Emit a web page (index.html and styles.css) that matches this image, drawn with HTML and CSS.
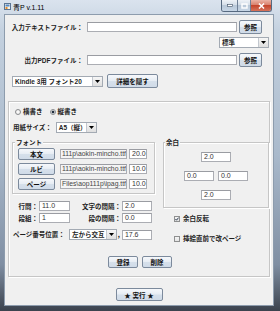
FILE: index.html
```html
<!DOCTYPE html>
<html>
<head>
    <meta charset="utf-8">
    <title>青P v.1.11</title>
    <link rel="stylesheet" href="styles.css">
</head>
<body>
    <div class="window">
        <div class="titlebar">
            <svg class="app-icon" width="7" height="7" viewBox="0 0 7 7">
                <rect x="0.5" y="0.5" width="6" height="6" fill="#f6f2e4" stroke="#5b7594"/>
                <rect x="1.5" y="1.5" width="4" height="2" fill="#4f86c6"/>
                <rect x="1.5" y="4" width="2" height="2" fill="#e08a2e"/>
            </svg>
            <span class="title">青P v.1.11</span>
            <div class="controls">
                <span class="ctl ctl-min">
                    <svg width="6" height="3" viewBox="0 0 6 3"><rect x="0.5" y="0.5" width="5" height="2" fill="#fff" stroke="#3c4d63" stroke-width="0.6"/></svg>
                </span>
                <span class="ctl ctl-max">
                    <svg width="7" height="6" viewBox="0 0 7 6"><rect x="1" y="1" width="5" height="4" fill="none" stroke="#fff" stroke-width="1.4"/></svg>
                </span>
                <span class="ctl ctl-close">
                    <svg width="7" height="6" viewBox="0 0 7 6"><path d="M1 0.5 L6 5.5 M6 0.5 L1 5.5" stroke="#fff" stroke-width="1.5"/></svg>
                </span>
            </div>
        </div>

        <div class="client">
            <div class="file-row">
                <span class="label file-label">入力テキストファイル：</span>
                <div class="field file-field"></div>
                <button class="btn browse">参照</button>
            </div>
            <div class="encoding-row">
                <div class="combo encoding">
                    <span class="combo-text">標準</span>
                    <span class="combo-arrow"><svg width="5" height="3" viewBox="0 0 5 3"><path d="M0 0 H5 L2.5 3 Z" fill="#000"/></svg></span>
                </div>
            </div>
            <div class="file-row out">
                <span class="label file-label">出力PDFファイル：</span>
                <div class="field file-field"></div>
                <button class="btn browse">参照</button>
            </div>
            <div class="profile-row">
                <div class="combo profile">
                    <span class="combo-text">Kindle 3用 フォント20</span>
                    <span class="combo-arrow"><svg width="5" height="3" viewBox="0 0 5 3"><path d="M0 0 H5 L2.5 3 Z" fill="#000"/></svg></span>
                </div>
                <button class="btn toggle">詳細を隠す</button>
            </div>

            <div class="detail">
                <div class="orient-row">
                    <label class="radio"><span class="radio-dot"></span>横書き</label>
                    <label class="radio"><span class="radio-dot checked"></span>縦書き</label>
                </div>
                <div class="paper-row">
                    <span class="label">用紙サイズ：</span>
                    <div class="combo paper">
                        <span class="combo-text">A5（縦）</span>
                        <span class="combo-arrow"><svg width="5" height="3" viewBox="0 0 5 3"><path d="M0 0 H5 L2.5 3 Z" fill="#000"/></svg></span>
                    </div>
                </div>

                <div class="columns">
                    <div class="col-left">
                        <div class="group font-group">
                            <div class="group-title">フォント</div>
                            <div class="font-rows">
                                <div class="font-row">
                                    <button class="btn font-btn">本文</button>
                                    <div class="field path">111p\aokin-mincho.ttf</div>
                                    <div class="field size">20.0</div>
                                </div>
                                <div class="font-row">
                                    <button class="btn font-btn">ルビ</button>
                                    <div class="field path">111p\aokin-mincho.ttf</div>
                                    <div class="field size">10.0</div>
                                </div>
                                <div class="font-row">
                                    <button class="btn font-btn">ページ</button>
                                    <div class="field path">Files\aop111p\ipag.ttf</div>
                                    <div class="field size">10.0</div>
                                </div>
                            </div>
                        </div>

                        <div class="spacing-grid">
                            <span class="label">行間：</span>
                            <div class="field">11.0</div>
                            <span class="label">文字の間隔：</span>
                            <div class="field">2.0</div>
                            <span class="label">段組：</span>
                            <div class="field">1</div>
                            <span class="label">段の間隔：</span>
                            <div class="field">0.0</div>
                        </div>

                        <div class="pageno-row">
                            <span class="label">ページ番号位置：</span>
                            <div class="combo pageno">
                                <span class="combo-text">左から交互</span>
                                <span class="combo-arrow"><svg width="5" height="3" viewBox="0 0 5 3"><path d="M0 0 H5 L2.5 3 Z" fill="#000"/></svg></span>
                            </div>
                            <span class="comma">，</span>
                            <div class="field pageno-size">17.6</div>
                        </div>
                    </div>

                    <div class="col-right">
                        <div class="group margin-group">
                            <div class="group-title">余白</div>
                            <div class="margin-fields">
                                <div class="field">2.0</div>
                                <div class="margin-mid">
                                    <div class="field">0.0</div>
                                    <div class="field">0.0</div>
                                </div>
                                <div class="field">2.0</div>
                            </div>
                        </div>
                        <label class="check first">
                            <span class="check-box"><svg width="4" height="4" viewBox="0 0 4 4"><path d="M0.4 2 L1.5 3.2 L3.6 0.6" fill="none" stroke="#1d2c44" stroke-width="0.9"/></svg></span>
                            余白反転
                        </label>
                        <label class="check second">
                            <span class="check-box"></span>
                            挿絵直前で改ページ
                        </label>
                    </div>
                </div>

                <div class="entry-row">
                    <button class="btn entry">登録</button>
                    <button class="btn entry">削除</button>
                </div>
            </div>

            <div class="run-row">
                <button class="btn run">★ 実行 ★</button>
            </div>
        </div>
    </div>
</body>
</html>
```

FILE: styles.css
```css
* {
    box-sizing: border-box;
}

body {
    margin: 0;
    font-family: "Liberation Sans", "Noto Sans CJK JP", sans-serif;
    font-size: 6.5px;
    color: #1e1e1e;
}

.window {
    width: 280px;
    height: 311px;
    display: flex;
    flex-direction: column;
    padding: 0 7px 6px 5px;
    background: linear-gradient(180deg, #dae3ee 0%, #c4d1df 10%, #a9b9cb 50%, #808fa3 85%, #3b424d 100%);
}

/* title bar */
.titlebar {
    height: 15px;
    margin: 0 -7px 0 -5px;
    padding: 0 8px 0 4px;
    display: flex;
    align-items: flex-start;
}

.app-icon {
    margin-top: 3px;
}

.title {
    margin: 3px 0 0 2px;
    font-size: 7px;
    line-height: 9px;
    color: #000;
}

.controls {
    margin-left: auto;
    display: flex;
    height: 12px;
    border: 1px solid #566980;
    border-top: none;
    border-radius: 0 0 3px 3px;
    overflow: hidden;
}

.ctl {
    display: flex;
    align-items: center;
    justify-content: center;
    height: 100%;
    background: linear-gradient(#eef2f7, #d1dbe6 50%, #b9c8d8 50%, #c7d6e6);
}

.ctl-min {
    width: 16px;
    border-right: 1px solid #6f8096;
}

.ctl-max {
    width: 13px;
    border-right: 1px solid #6f8096;
}

.ctl-close {
    width: 20px;
    background: linear-gradient(#eab2a4, #d77b66 50%, #c4452c 50%, #d6735b);
}

/* client area */
.client {
    flex: 1;
    display: flex;
    flex-direction: column;
    background: #f0f0f0;
    box-shadow: 0 0 0 1px #8d9cad;
}

.label {
    font-weight: bold;
    white-space: nowrap;
    line-height: 9px;
}

.field {
    height: 10px;
    border: 1px solid #abadb3;
    border-top-color: #9a9ca2;
    background: #fff;
    font-size: 7px;
    line-height: 8px;
    padding-left: 2px;
    color: #333;
    overflow: hidden;
    white-space: nowrap;
}

.btn {
    display: flex;
    align-items: center;
    justify-content: center;
    padding: 0;
    font-family: inherit;
    font-size: 6.5px;
    font-weight: bold;
    color: #111;
    border: 1px solid #7c8a9c;
    border-radius: 2px;
    background: linear-gradient(#f6f8fb, #e7edf4 48%, #d6e0eb 52%, #d0dbe8);
    white-space: nowrap;
}

.combo {
    display: flex;
    height: 11px;
    border: 1px solid #a3aab3;
    background: #fff;
}

.combo-text {
    flex: 1;
    padding-left: 2px;
    line-height: 9px;
    font-size: 6.5px;
    font-weight: bold;
    white-space: nowrap;
    overflow: hidden;
}

.combo-arrow {
    width: 10px;
    display: flex;
    align-items: center;
    justify-content: center;
    border-left: 1px solid #c3c8cf;
    background: linear-gradient(#f6f6f6, #dedede);
}

/* top rows */
.file-row {
    display: flex;
    align-items: center;
    height: 14px;
    margin-top: 5px;
}

.file-label {
    width: 82px;
    text-align: right;
    padding-right: 4px;
}

.file-field {
    width: 150px;
}

.browse {
    width: 23px;
    height: 14px;
    margin-left: 2px;
}

.encoding-row {
    display: flex;
    justify-content: flex-end;
    padding-right: 4px;
    margin-top: 3px;
}

.encoding {
    width: 50px;
}

.profile-row {
    display: flex;
    align-items: center;
    gap: 4px;
    height: 14px;
    margin: 7px 0 0 7px;
}

.profile {
    width: 91px;
}

.toggle {
    width: 51px;
    height: 14px;
}

/* detail panel */
.detail {
    height: 176px;
    margin: 13px 3px 0;
    border: 1px solid #c6c6c6;
    box-shadow: inset 1px 1px 0 #fff, 1px 1px 0 #fff;
}

.orient-row {
    display: flex;
    align-items: center;
    height: 8px;
    margin: 6px 0 0 6px;
}

.radio {
    display: flex;
    align-items: center;
    gap: 2px;
    margin-right: 7px;
    font-weight: bold;
    line-height: 8px;
}

.radio-dot {
    width: 6px;
    height: 6px;
    border-radius: 50%;
    border: 1px solid #8a8c8e;
    background: radial-gradient(circle, #fff 0, #e4e4e4 100%);
}

.radio-dot.checked {
    background: radial-gradient(circle, #1f2c3c 0, #1f2c3c 1.3px, #fff 1.7px);
}

.paper-row {
    display: flex;
    align-items: center;
    gap: 4px;
    height: 11px;
    margin: 6px 0 0 4px;
}

.paper {
    width: 41px;
}

.columns {
    display: grid;
    grid-template-columns: 143px 106px;
    column-gap: 8px;
    margin: 9px 0 0 3px;
}

.group {
    border: 1px solid #c6c6c6;
    box-shadow: inset 1px 1px 0 #fff, 1px 1px 0 #fff;
}

.group-title {
    width: max-content;
    height: 9px;
    line-height: 9px;
    padding: 0 1px;
    background: #f0f0f0;
    font-weight: bold;
}

.font-group {
    height: 52px;
    padding-left: 5px;
}

.font-group .group-title {
    margin: -5px 0 -4px -3px;
}

.font-rows {
    display: flex;
    flex-direction: column;
    gap: 3px;
    margin-top: 5px;
}

.font-row {
    display: flex;
    align-items: center;
}

.font-btn {
    width: 37px;
    height: 12px;
}

.path {
    width: 67px;
    margin-left: 5px;
    padding: 0 1px;
    background: #f4f4f4;
    color: #444;
    font-size: 6.8px;
}

.size {
    width: 18px;
    margin-left: 2px;
}

.spacing-grid {
    display: grid;
    grid-template-columns: 27px 31px 52px 30px;
    grid-auto-rows: 10px;
    row-gap: 2px;
    align-items: center;
    margin-top: 7px;
}

.spacing-grid .label {
    text-align: right;
    padding-right: 1px;
}

.pageno-row {
    display: flex;
    align-items: center;
    height: 11px;
    margin: 6px 0 0 1px;
}

.pageno {
    width: 48px;
    margin-left: 4px;
}

.comma {
    width: 5px;
    line-height: 9px;
    font-weight: bold;
}

.pageno-size {
    width: 30px;
}

.margin-group {
    height: 66px;
}

.margin-group .group-title {
    margin: -5px 0 -4px 1px;
}

.margin-fields {
    display: flex;
    flex-direction: column;
    align-items: center;
    gap: 9px;
    margin-top: 9px;
}

.margin-fields .field {
    width: 30px;
}

.margin-mid {
    display: flex;
    gap: 4px;
}

.check {
    display: flex;
    align-items: center;
    gap: 3px;
    height: 7px;
    margin-left: 11px;
    font-weight: bold;
    line-height: 8px;
}

.check.first {
    margin-top: 7px;
}

.check.second {
    margin-top: 13px;
}

.check-box {
    width: 6px;
    height: 6px;
    display: flex;
    align-items: center;
    justify-content: center;
    border: 1px solid #8e8f8f;
    background: linear-gradient(#f4f4f4, #e2e2e2);
}

.entry-row {
    display: flex;
    justify-content: center;
    gap: 4px;
    padding-left: 2px;
    margin-top: 14px;
}

.entry {
    width: 30px;
    height: 12px;
}

.run-row {
    display: flex;
    justify-content: center;
    margin-top: 11px;
}

.run {
    width: 47px;
    height: 13px;
}
```
